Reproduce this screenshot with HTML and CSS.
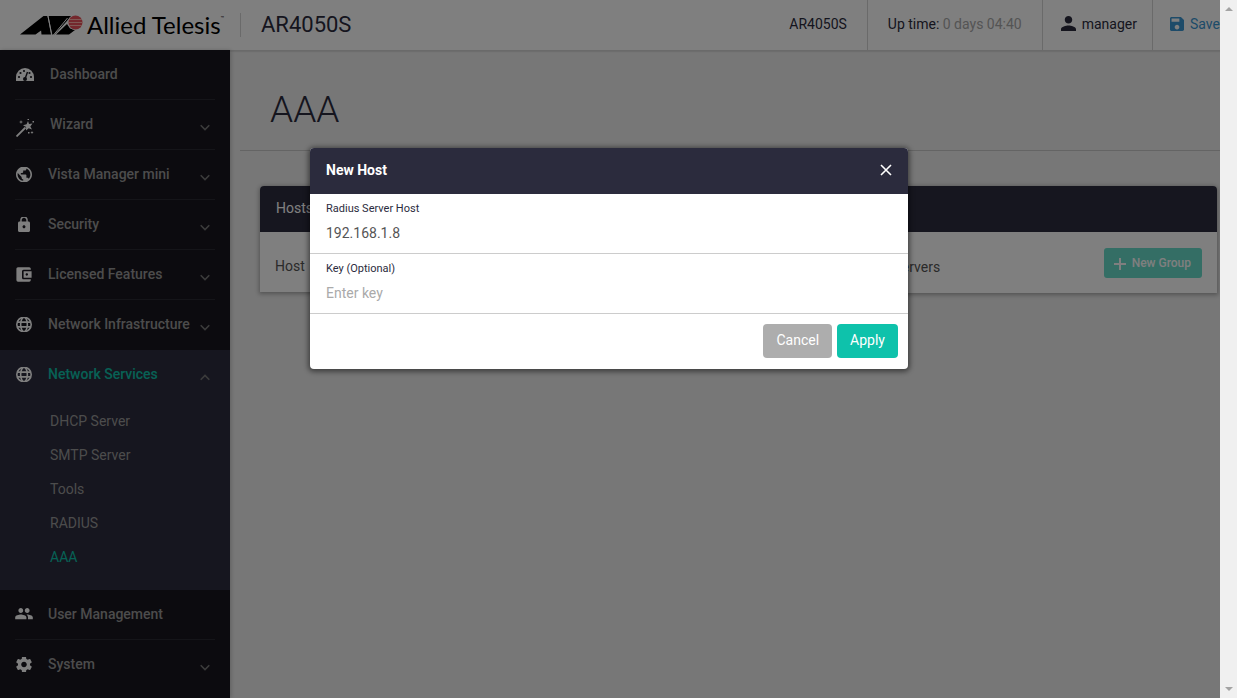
FILE: index.html
```html
<!DOCTYPE html>
<html lang="en">
<head>
    <meta charset="UTF-8">
    <title>AR4050S - AAA</title>
    <link rel="stylesheet" href="styles.css">
</head>
<body>
    <!-- shared icons -->
    <svg class="sprite">
        <symbol id="globe" viewBox="2 3 20 18">
            <g fill="none" stroke="currentColor" stroke-width="2">
                <circle cx="12" cy="12" r="9"/>
                <ellipse cx="12" cy="12" rx="4.2" ry="9"/>
                <path d="M3.5 9h17M3.5 15h17"/>
            </g>
        </symbol>
        <symbol id="chevron-down" viewBox="0 0 10 7">
            <path d="M.7 1.2L5 5.5l4.3-4.3" fill="none" stroke="currentColor" stroke-width="1.6"/>
        </symbol>
    </svg>

    <div class="screen">
        <header class="topbar">
            <div class="brand">
                <svg class="brand-mark" viewBox="0 0 63 20">
                    <path d="M0 19.5L23.5 1h4l3.5 18.5h-9.500l-.4-4-5.600 4z"/>
                    <path d="M28.5 1H51l-5 6-11.500 12.500h-2.500z"/>
                    <path d="M47 9l3 4.500 5 1.500-6 4.500H36z"/>
                    <path d="M27.800.5l4 19M47.500 3L33.500 20" stroke="#fff" stroke-width="1" fill="none"/>
                    <circle cx="55.500" cy="7.500" r="7.500" fill="#fff"/>
                    <circle cx="55.500" cy="7.500" r="7" fill="#e8505b"/>
                    <path d="M49 4.500h13M48 7.500h15M49 10.500h13" stroke="#ffb0a8" stroke-width="1"/>
                </svg>
                <span class="brand-name">Allied Telesis</span><span class="brand-tm">™</span>
            </div>
            <h2 class="device">AR4050S</h2>
            <ul class="status">
                <li>AR4050S</li>
                <li>Up time: <span class="uptime">0 days 04:40</span></li>
                <li class="user">
                    <svg width="15" height="15" viewBox="4 4 16 16"><path fill="currentColor" d="M12 12c2.210 0 4-1.790 4-4s-1.790-4-4-4-4 1.790-4 4 1.790 4 4 4zm0 2c-2.670 0-8 1.340-8 4v2h16v-2c0-2.660-5.330-4-8-4z"/></svg>
                    manager
                </li>
                <li class="save">
                    <a href="#">
                        <svg width="16" height="16" viewBox="3 3 18 18"><path fill="currentColor" d="M17 3H5c-1.110 0-2 .9-2 2v14c0 1.100.89 2 2 2h14c1.100 0 2-.9 2-2V7l-4-4zm-5 16c-1.660 0-3-1.340-3-3s1.340-3 3-3 3 1.340 3 3-1.340 3-3 3zm3-10H5V5h10v4z"/></svg>
                        Save
                    </a>
                </li>
            </ul>
        </header>

        <div class="body">
            <nav class="sidebar">
                <ul>
                    <li><a href="#">
                        <svg class="icon wide" viewBox="0 0 18 14">
                            <path fill="currentColor" d="M0 9a9 9 0 0 1 18 0v4H0z"/>
                            <g fill="#18171f"><circle cx="3" cy="9" r="1.100"/><circle cx="4.500" cy="5" r="1.100"/><circle cx="8" cy="3" r="1.100"/><circle cx="13.500" cy="5" r="1.100"/><circle cx="15" cy="9" r="1.100"/><circle cx="9" cy="11" r="2"/></g>
                            <path d="M9 11l2.500-7" stroke="#18171f" stroke-width="1.400"/>
                        </svg>
                        <span>Dashboard</span></a></li>
                    <li><a href="#">
                        <svg class="icon wand" viewBox="0 0 18 18">
                            <path d="M.5 17.500l9-9" stroke="currentColor" stroke-width="1.800"/>
                            <path fill="currentColor" d="M12 2l1 3 3.500-.4-2.200 2.800L16 10.500l-3.300-1.200-2.700 2.200.1-3.500L7 6.200l3.600-.9zM5 1l.5 1.500L7 3l-1.500.5L5 5l-.5-1.500L3 3l1.500-.5zM16 12l.5 1 1 .5-1 .5-.5 1-.5-1-1-.5 1-.5zM12 13h1.500v1.500H12zM16.500 2H18v1.500h-1.500zM11.500 0H13v1h-1.500z"/>
                        </svg>
                        <span>Wizard</span><svg class="chevron"><use href="#chevron-down"/></svg></a></li>
                    <li><a href="#">
                        <svg class="icon" viewBox="2 3 20 18"><path fill="currentColor" d="M12 2C6.480 2 2 6.480 2 12s4.480 10 10 10 10-4.480 10-10S17.520 2 12 2zm-1 17.930c-3.950-.49-7-3.850-7-7.930 0-.62.080-1.210.21-1.790L9 15v1c0 1.100.9 2 2 2v1.930zm6.900-2.540c-.26-.81-1-1.390-1.900-1.390h-1v-3c0-.55-.45-1-1-1H8v-2h2c.55 0 1-.45 1-1V7h2c1.100 0 2-.9 2-2v-.41c2.930 1.190 5 4.060 5 7.410 0 2.080-.8 3.970-2.100 5.390z"/></svg>
                        <span>Vista Manager mini</span><svg class="chevron"><use href="#chevron-down"/></svg></a></li>
                    <li><a href="#">
                        <svg class="icon" viewBox="2 2 20 20"><path fill="currentColor" d="M18 8h-1V6c0-2.760-2.240-5-5-5S7 3.240 7 6v2H6c-1.100 0-2 .9-2 2v10c0 1.100.9 2 2 2h12c1.100 0 2-.9 2-2V10c0-1.100-.9-2-2-2zm-6 9c-1.100 0-2-.9-2-2s.9-2 2-2 2 .9 2 2-.9 2-2 2zm3.100-9H8.900V6c0-1.710 1.390-3.100 3.100-3.100s3.100 1.390 3.100 3.100v2z"/></svg>
                        <span>Security</span><svg class="chevron"><use href="#chevron-down"/></svg></a></li>
                    <li><a href="#">
                        <svg class="icon" viewBox="2.500 3 20 18"><path fill="currentColor" d="M21 18v1c0 1.100-.9 2-2 2H5c-1.110 0-2-.9-2-2V5c0-1.100.89-2 2-2h14c1.100 0 2 .9 2 2v1h-9c-1.110 0-2 .9-2 2v8c0 1.100.89 2 2 2h9zm-9-2h10V8H12v8zm4-2.500c-.83 0-1.500-.67-1.500-1.500s.67-1.500 1.500-1.500 1.500.67 1.500 1.500-.67 1.500-1.500 1.500z"/></svg>
                        <span>Licensed Features</span><svg class="chevron"><use href="#chevron-down"/></svg></a></li>
                    <li><a href="#">
                        <svg class="icon"><use href="#globe"/></svg>
                        <span>Network Infrastructure</span><svg class="chevron"><use href="#chevron-down"/></svg></a></li>
                    <li class="open"><a href="#">
                        <svg class="icon"><use href="#globe"/></svg>
                        <span>Network Services</span><svg class="chevron up"><use href="#chevron-down"/></svg></a>
                        <ul class="submenu">
                            <li><a href="#">DHCP Server</a></li>
                            <li><a href="#">SMTP Server</a></li>
                            <li><a href="#">Tools</a></li>
                            <li><a href="#">RADIUS</a></li>
                            <li class="current"><a href="#">AAA</a></li>
                        </ul>
                    </li>
                    <li><a href="#">
                        <svg class="icon people" viewBox="2 4 20 18"><path fill="currentColor" d="M16 11c1.660 0 2.990-1.340 2.990-3S17.660 5 16 5c-1.660 0-3 1.340-3 3s1.340 3 3 3zm-8 0c1.660 0 2.990-1.340 2.990-3S9.660 5 8 5C6.340 5 5 6.340 5 8s1.340 3 3 3zm0 2c-2.330 0-7 1.170-7 3.500V19h14v-2.500c0-2.330-4.670-3.500-7-3.500zm8 0c-.29 0-.62.020-.97.050 1.160.84 1.970 1.970 1.970 3.450V19h6v-2.500c0-2.330-4.670-3.500-7-3.500z"/></svg>
                        <span>User Management</span></a></li>
                    <li><a href="#">
                        <svg class="icon" viewBox="2 3 20 18"><path fill="currentColor" d="M19.430 12.980c.040-.32.070-.64.070-.98s-.030-.66-.070-.98l2.110-1.650c.19-.15.24-.42.120-.64l-2-3.460c-.12-.22-.39-.3-.61-.22l-2.490 1c-.52-.4-1.080-.73-1.690-.98l-.38-2.650C14.460 2.180 14.250 2 14 2h-4c-.25 0-.46.18-.49.42l-.38 2.650c-.61.25-1.170.59-1.690.98l-2.490-1c-.23-.090-.49 0-.61.22l-2 3.460c-.13.22-.070.49.12.64l2.110 1.650c-.040.32-.070.65-.070.98s.030.66.070.98l-2.110 1.650c-.19.15-.24.42-.12.64l2 3.460c.12.22.39.3.61.22l2.490-1c.52.4 1.080.73 1.690.98l.38 2.650c.030.24.24.42.49.42h4c.25 0 .46-.18.49-.42l.38-2.650c.61-.25 1.170-.59 1.690-.98l2.490 1c.23.090.49 0 .61-.22l2-3.460c.12-.22.070-.49-.12-.64l-2.110-1.650zM12 15.500c-1.930 0-3.500-1.570-3.500-3.500s1.570-3.500 3.500-3.500 3.500 1.570 3.500 3.500-1.570 3.500-3.500 3.500z"/></svg>
                        <span>System</span><svg class="chevron"><use href="#chevron-down"/></svg></a></li>
                </ul>
            </nav>

            <main>
                <h1>AAA</h1>
                <div class="cards">
                    <section class="card">
                        <h3>Hosts</h3>
                        <div class="card-row">
                            <span>Host</span>
                        </div>
                    </section>
                    <section class="card">
                        <h3>Groups</h3>
                        <div class="card-row tall">
                            <span class="servers">Servers</span>
                            <button type="button" class="new-group">
                                <svg width="12" height="12" viewBox="0 0 12 12"><path d="M6 0v12M0 6h12" stroke="currentColor" stroke-width="2"/></svg>
                                New Group
                            </button>
                        </div>
                    </section>
                </div>
            </main>
        </div>

        <div class="overlay">
            <form class="modal" role="dialog" aria-labelledby="modal-title">
                <div class="modal-header">
                    <h4 id="modal-title">New Host</h4>
                    <button type="button" class="close" aria-label="Close">
                        <svg width="12" height="12" viewBox="0 0 12 12"><path d="M1 1l10 10M11 1L1 11" stroke="currentColor" stroke-width="1.600"/></svg>
                    </button>
                </div>
                <div class="field">
                    <label for="host">Radius Server Host</label>
                    <input type="text" id="host" value="192.168.1.8">
                </div>
                <div class="field">
                    <label for="key">Key (Optional)</label>
                    <input type="text" id="key" placeholder="Enter key">
                </div>
                <div class="modal-footer">
                    <button type="button" class="btn cancel">Cancel</button>
                    <button type="submit" class="btn apply">Apply</button>
                </div>
            </form>
        </div>
    </div>

    <div class="scrollbar">
        <span class="arrow arrow-up"></span>
        <span class="arrow arrow-down"></span>
    </div>
</body>
</html>
```
FILE: styles.css
```css
* {
    margin: 0;
    padding: 0;
    box-sizing: border-box;
}

body {
    display: flex;
    height: 100vh;
    overflow: hidden;
    font-family: Roboto, sans-serif;
    font-size: 14px;
    color: #2b2b3d;
}

ul {
    list-style: none;
}

a {
    color: inherit;
    text-decoration: none;
}

button {
    border: none;
    font-family: inherit;
    font-size: 14px;
    color: #fff;
    cursor: pointer;
}

.sprite {
    position: absolute;
    width: 0;
    height: 0;
}

.screen {
    position: relative;
    flex: 1;
    min-width: 0;
    display: flex;
    flex-direction: column;
    overflow: hidden;
    background: #eee;
}

/* top bar */
.topbar {
    display: flex;
    align-items: center;
    height: 51px;
    flex-shrink: 0;
    background: #fff;
    border-bottom: 1px solid #d4d4d4;
    box-shadow: 0 1px 1px rgba(0, 0, 0, 0.08);
    z-index: 1;
}
.brand {
    display: flex;
    align-items: center;
    width: 241px;
    height: 24px;
    padding-left: 20px;
    border-right: 1px solid #d4d4d4;
    color: #000;
}
.brand-mark {
    width: 63px;
    height: 20px;
    margin-right: 4px;
}
.brand-name {
    font-family: Lato, sans-serif;
    font-size: 24px;
    line-height: 24px;
    white-space: nowrap;
}
.brand-tm {
    align-self: flex-start;
    font-size: 6px;
    line-height: 10px;
}
.device {
    margin-left: 20px;
    font-size: 22px;
    font-weight: 400;
    line-height: 48px;
}
.status {
    display: flex;
    height: 50px;
    margin-left: auto;
    line-height: 48px;
    white-space: nowrap;
}
.status li {
    padding: 0 20px;
    border-right: 1px solid #d4d4d4;
}
.status .user {
    display: flex;
    gap: 6px;
    padding: 0 15px 0 18px;
}
.status svg {
    margin-top: 16px;
}
.status .save {
    width: 67px;
    padding: 0 0 0 17px;
    border: none;
    overflow: hidden;
    color: #3a96d2;
}
.save a {
    display: flex;
    gap: 6px;
}
.uptime {
    color: #a9a9a9;
}

/* sidebar */
.body {
    display: flex;
    flex: 1;
    min-height: 0;
}
.sidebar {
    width: 230px;
    margin-top: -1px;
    flex-shrink: 0;
    overflow: hidden;
    background: #18171f;
    box-shadow: 1px 0 4px rgba(0, 0, 0, 0.2);
    color: #999;
    z-index: 2;
}
.sidebar > ul > li > a {
    display: flex;
    align-items: center;
    gap: 16px;
    height: 50px;
    margin: 0 15px;
    padding-left: 1px;
    border-bottom: 1px solid #2b2b33;
    font-weight: 500;
    line-height: 48px;
}
.sidebar > ul > li:nth-child(6) > a,
.sidebar > ul > li:last-child > a,
.sidebar > ul > .open > a {
    border-color: transparent;
}
.sidebar a > span {
    flex: 1;
    padding-bottom: 1px;
    white-space: nowrap;
}
.icon {
    width: 16px;
    height: 15px;
    flex-shrink: 0;
    color: #fff;
}
.wide {
    width: 18px;
    height: 14px;
}
.wand {
    width: 18px;
    height: 18px;
    margin-top: 6px;
}
.people {
    overflow: visible;
}
.chevron {
    width: 10px;
    height: 7px;
    margin: 6px 5px 0 0;
    color: #777;
}
.sidebar a > span + .chevron {
    margin-left: -16px;
}
.up {
    transform: rotate(180deg);
}
.open {
    background: #2d2d3f;
}
.open > a > span,
.submenu .current {
    color: #0ec2ab;
}
.submenu {
    padding: 4px 0 16px 50px;
    line-height: 34px;
}

/* page */
main {
    flex: 1;
    min-width: 0;
    padding: 0 3px 0 10px;
}
h1 {
    height: 100px;
    margin-right: -3px;
    padding: 38px 30px 0;
    border-bottom: 1px solid #c8c8c8;
    font-size: 37px;
    font-weight: 300;
    line-height: 42px;
}
.cards {
    display: flex;
    align-items: flex-start;
    gap: 20px;
    padding: 35px 0 0 20px;
}
.card {
    flex: 1;
    background: #fff;
    border-radius: 4px 4px 0 0;
    box-shadow: 0 1px 4px 1px rgba(0, 0, 0, 0.3);
}
.card h3 {
    height: 46px;
    padding-left: 16px;
    border-radius: 4px 4px 0 0;
    background: #2d2d3f;
    color: #fff;
    font-size: 14px;
    font-weight: 400;
    line-height: 45px;
}
.card-row {
    display: flex;
    align-items: center;
    height: 60px;
    padding: 7px 15px 0;
    color: #555;
}
.tall {
    height: 61px;
    padding: 0 15px;
}
.servers {
    margin: 8px 0 0 130px;
}
.new-group {
    display: flex;
    align-items: center;
    gap: 6px;
    height: 30px;
    margin-left: auto;
    padding: 0 11px 0 10px;
    border-radius: 3px;
    background: #68dccb;
    font-size: 12px;
    font-weight: 500;
}
.new-group svg {
    margin-top: 2px;
}

/* dialog */
.overlay {
    position: absolute;
    inset: 0;
    display: flex;
    justify-content: center;
    align-items: flex-start;
    padding: 148px 2px 0 0;
    background: rgba(0, 0, 0, 0.5);
    z-index: 10;
}
.modal {
    width: 598px;
    max-width: 100%;
    background: #fff;
    border-radius: 4px;
    box-shadow: 0 1px 5px 2px rgba(0, 0, 0, 0.45);
}
.modal-header {
    display: flex;
    justify-content: space-between;
    height: 46px;
    padding: 0 16px;
    border-radius: 4px 4px 0 0;
    background: #2b2b3d;
    color: #fff;
}
.modal-header h4 {
    font-weight: 700;
    line-height: 44px;
}
.close {
    height: 44px;
    background: none;
}
.close svg {
    display: block;
}
.field {
    height: 60px;
    padding: 8px 16px 0;
    border-bottom: 1px solid #ccc;
}
.field label {
    display: block;
    font-size: 11px;
    line-height: 14px;
}
.field input {
    display: block;
    width: 100%;
    height: 20px;
    margin-top: 7px;
    border: none;
    outline: none;
    font-family: inherit;
    font-size: 14px;
    color: #555;
}
.field input::placeholder {
    color: #aaa;
}
.modal-footer {
    display: flex;
    justify-content: flex-end;
    gap: 5px;
    padding: 10px 10px 11px;
}
.btn {
    height: 34px;
    padding: 0 13px 2px;
    border-radius: 4px;
}
.cancel {
    background: #adadad;
}
.apply {
    background: #0ec2ab;
}

/* scroll bar */
.scrollbar {
    display: flex;
    flex-direction: column;
    justify-content: space-between;
    align-items: center;
    width: 17px;
    padding: 7px 0;
    background: #f0f0f0;
}
.arrow {
    border: 4px solid transparent;
}
.arrow-up {
    border-top: none;
    border-bottom-color: #a3a3a3;
}
.arrow-down {
    border-bottom: none;
    border-top-color: #a3a3a3;
}
```
